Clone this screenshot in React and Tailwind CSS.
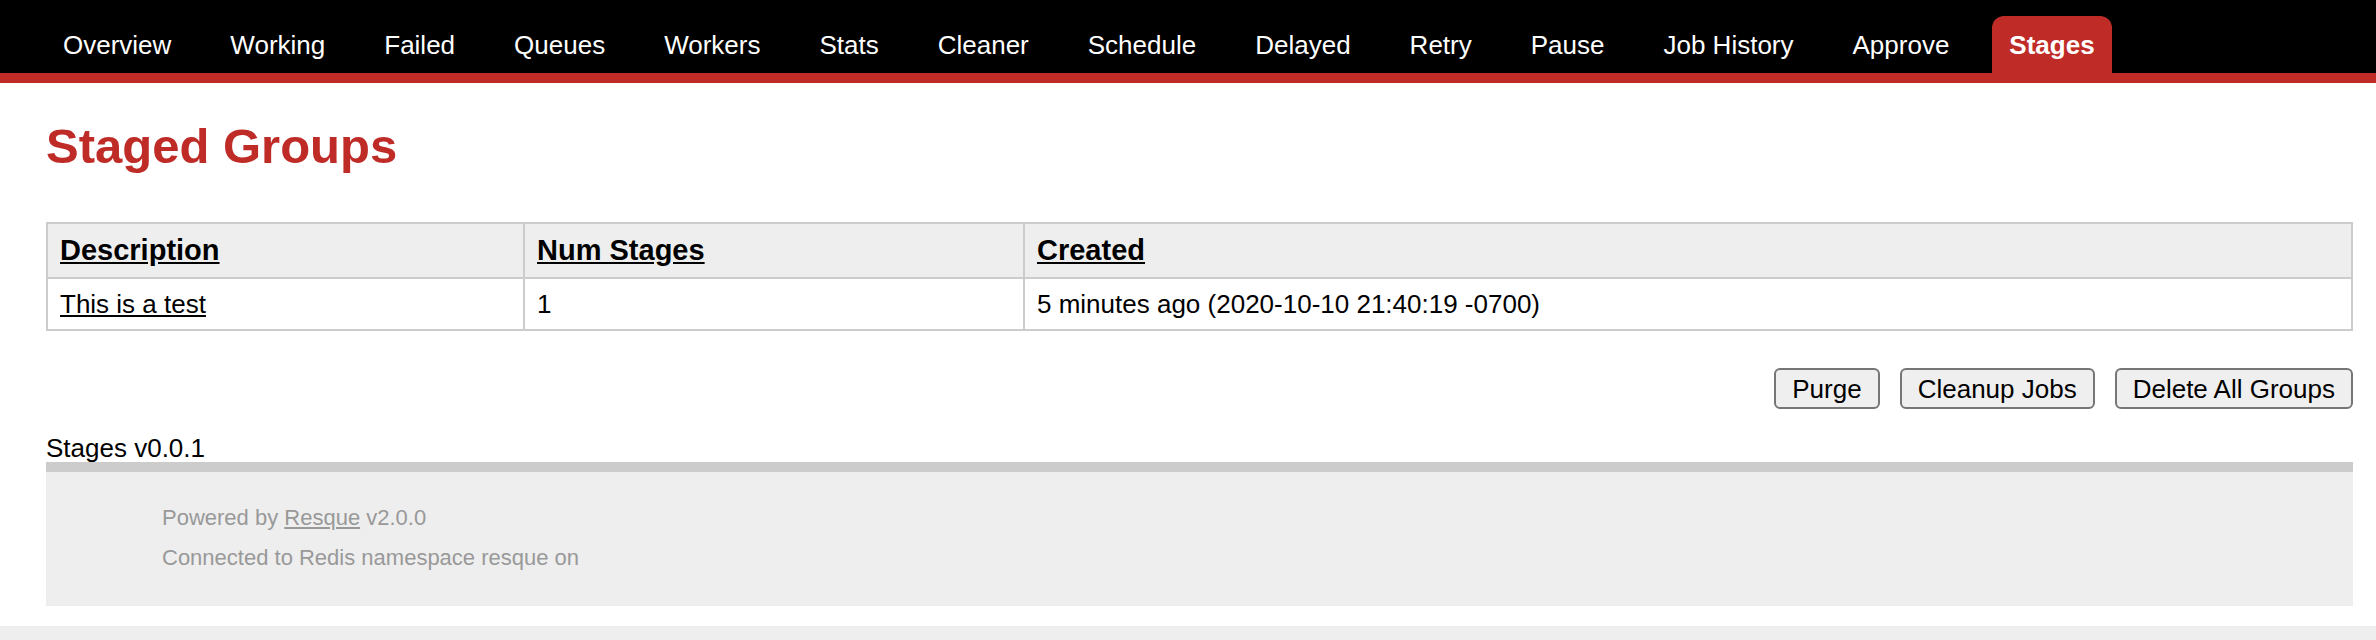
import clsx from 'clsx';

const tabs = [
  'Overview',
  'Working',
  'Failed',
  'Queues',
  'Workers',
  'Stats',
  'Cleaner',
  'Schedule',
  'Delayed',
  'Retry',
  'Pause',
  'Job History',
  'Approve',
  'Stages',
];

function Header() {
  return (
    <div className="bg-black pt-4 pl-[47px] border-b-[10px] border-[#bf2c27]">
      <ul className="flex gap-[27px]">
        {tabs.map((t) => (
          <li key={t}>
            <a
              href="#"
              className={clsx(
                'flex h-[57px] items-center leading-[30px] text-white no-underline',
                t === 'Stages' ? 'rounded-t-[12px] bg-[#bf2c27] px-[17px] font-bold' : 'px-4'
              )}
            >
              {t}
            </a>
          </li>
        ))}
      </ul>
    </div>
  );
}

function GroupsTable() {
  return (
    <table className="mt-[47px] w-full border-separate border-spacing-0 border-t-2 border-l-2 border-[#ccc] text-left">
      <thead>
        <tr className="bg-[#eeeeee]">
          <th className="w-[477px] border-r-2 border-b-2 border-[#ccc] px-3 py-3 text-[29px] leading-[29px] font-bold">
            <a href="#" className="underline">Description</a>
          </th>
          <th className="w-[500px] border-r-2 border-b-2 border-[#ccc] px-3 py-3 text-[29px] leading-[29px] font-bold">
            <a href="#" className="underline">Num Stages</a>
          </th>
          <th className="border-r-2 border-b-2 border-[#ccc] px-3 py-3 text-[29px] leading-[29px] font-bold">
            <a href="#" className="underline">Created</a>
          </th>
        </tr>
      </thead>
      <tbody>
        <tr>
          <td className="border-r-2 border-b-2 border-[#ccc] px-3 py-3 leading-[26px]">
            <a href="#" className="underline">This is a test</a>
          </td>
          <td className="border-r-2 border-b-2 border-[#ccc] px-3 py-3 leading-[26px]">1</td>
          <td className="border-r-2 border-b-2 border-[#ccc] px-3 py-3 leading-[26px]">
            5 minutes ago (2020-10-10 21:40:19 -0700)
          </td>
        </tr>
      </tbody>
    </table>
  );
}

function ActionButton({ children }) {
  return (
    <button
      type="button"
      className="h-[41px] rounded-[6px] border-2 border-[#767676] bg-[#efefef] px-4 text-[26px] leading-none text-black"
    >
      {children}
    </button>
  );
}

export default function App() {
  return (
    <div className="min-h-[640px] bg-white font-['Liberation_Sans',Arial,sans-serif] text-[26px] text-black">
      <Header />

      <div className="pl-[46px] pr-[23px] pt-[34px] pb-[20px]">
        <h1 className="text-[49px] font-bold leading-[58px] text-[#bf2c27]">Staged Groups</h1>

        <GroupsTable />

        <div className="mt-[37px] flex justify-end gap-[20px]">
          <ActionButton>Purge</ActionButton>
          <ActionButton>Cleanup Jobs</ActionButton>
          <ActionButton>Delete All Groups</ActionButton>
        </div>

        <p className="mt-[25px] leading-[28px]">Stages v0.0.1</p>

        <div className="border-t-[10px] border-[#ccc] bg-[#eeeeee] pl-[116px] pt-[26px] pb-[28px] text-[22px] leading-[40px] text-[#999]">
          <p>
            Powered by <a href="#" className="underline">Resque</a> v2.0.0
          </p>
          <p>Connected to Redis namespace resque on </p>
        </div>
      </div>

      <div className="h-[20px] bg-[#eeeeee]" />
    </div>
  );
}
